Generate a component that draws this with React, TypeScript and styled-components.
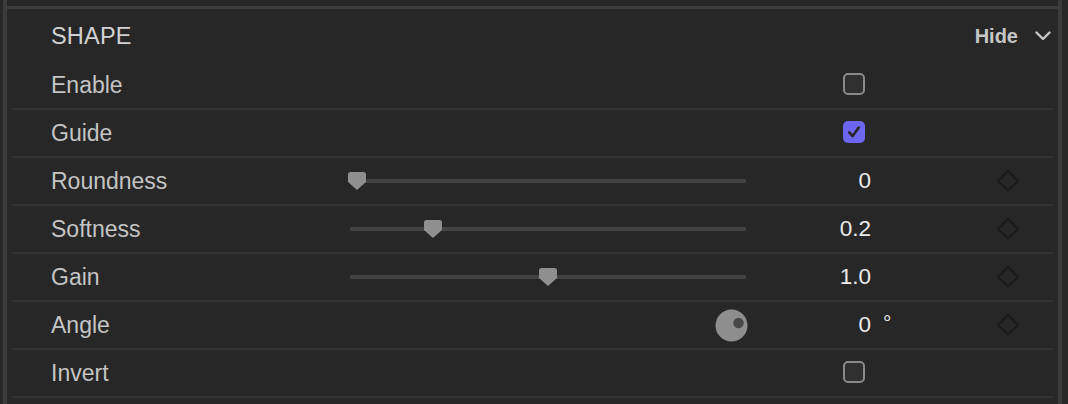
import React from 'react';
import styled, { createGlobalStyle } from 'styled-components';

type Control =
  | { kind: 'check'; checked: boolean }
  | { kind: 'slider'; value: number; min: number; max: number; text: string }
  | { kind: 'dial'; text: string; unit: string };

interface Param {
  label: string;
  control: Control;
}

const params: Param[] = [
  { label: 'Enable', control: { kind: 'check', checked: false } },
  { label: 'Guide', control: { kind: 'check', checked: true } },
  { label: 'Roundness', control: { kind: 'slider', value: 0, min: 0, max: 1, text: '0' } },
  { label: 'Softness', control: { kind: 'slider', value: 0.2, min: 0, max: 1, text: '0.2' } },
  { label: 'Gain', control: { kind: 'slider', value: 1, min: 0, max: 2, text: '1.0' } },
  { label: 'Angle', control: { kind: 'dial', text: '0', unit: '°' } },
  { label: 'Invert', control: { kind: 'check', checked: false } },
];

const GlobalStyle = createGlobalStyle`
  html, body {
    margin: 0;
    padding: 0;
    background: #272727;
    overflow: hidden;
  }
  body {
    font-family: "Liberation Sans", Arial, sans-serif;
  }
`;

const Frame = styled.div`
  margin-left: 3px;
  width: 1051px;
  height: 404px;
  padding-top: 6px;
  border-left: 4px solid #3b3b3b;
  border-right: 4px solid #3b3b3b;
  background: #272727;
`;

const TopRule = styled.div`
  height: 3px;
  background: #3b3b3b;
`;

const Rows = styled.div`
  margin: 0 5px;
`;

const Header = styled.div`
  height: 53px;
  display: flex;
  align-items: center;
  justify-content: space-between;
  padding-left: 39px;
  padding-right: 2px;
  padding-top: 2px;
  box-sizing: border-box;
`;

const Title = styled.div`
  font-size: 23.5px;
  letter-spacing: 0.2px;
  color: #d2d2d2;
`;

const HideButton = styled.div`
  display: flex;
  align-items: center;
  gap: 17px;
  font-size: 20px;
  font-weight: bold;
  color: #c6c6c6;
  padding-bottom: 1px;
`;

const Row = styled.div`
  height: 46px;
  display: grid;
  grid-template-columns: 338px 396px 125px 1fr 22px 34px;
  align-items: center;
  border-bottom: 2px solid #323232;
`;

const Label = styled.div`
  padding-left: 39px;
  font-size: 23px;
  color: #c4c4c4;
`;

const ControlCell = styled.div`
  display: flex;
  align-items: center;
  justify-content: flex-end;
  height: 100%;
`;

const ValueCell = styled.div<{ $inset?: number }>`
  display: flex;
  justify-content: flex-end;
  align-items: center;
  padding-right: ${p => p.$inset ?? 0}px;
  font-size: 22.5px;
  color: #ebebeb;
`;

const Unit = styled.div`
  padding-left: 12px;
  font-size: 21px;
  color: #e4e4e4;
  align-self: start;
  padding-top: 9px;
`;

const SliderWrap = styled.div`
  position: relative;
  width: 396px;
  height: 24px;
  display: flex;
  align-items: center;
`;

const Track = styled.div`
  width: 100%;
  height: 4px;
  border-radius: 2px;
  background: #444444;
`;

const Thumb = styled.svg`
  position: absolute;
  top: 3px;
  width: 18px;
  height: 18px;
  transform: translateX(-9px);
`;

const Box = styled.div<{ $checked: boolean }>`
  width: 22px;
  height: 22px;
  margin-bottom: 3px;
  box-sizing: border-box;
  border-radius: 5px;
  border: ${p => (p.$checked ? 'none' : '2px solid #8a8a8a')};
  background: ${p => (p.$checked ? '#6c66f0' : '#303030')};
  display: flex;
  align-items: center;
  justify-content: center;
`;

const Keyframe = styled.svg`
  width: 22px;
  height: 22px;
  display: block;
`;

const Slider: React.FC<{ value: number; min: number; max: number }> = ({ value, min, max }) => {
  const frac = (value - min) / (max - min);
  return (
    <SliderWrap>
      <Track />
      <Thumb viewBox="0 0 18 18" style={{ left: `${7 + frac * 382}px` }}>
        <path d="M2.5 0 H15.5 Q18 0 18 2.5 V10 L9 18 L0 10 V2.5 Q0 0 2.5 0 Z" fill="#8f8f8f" />
      </Thumb>
    </SliderWrap>
  );
};

const Dial: React.FC = () => (
  <svg width="33" height="33" viewBox="0 0 33 33" style={{ marginRight: -2, marginTop: 1 }}>
    <circle cx="16.5" cy="16.5" r="16" fill="#8e8e8e" />
    <circle cx="23.5" cy="14" r="5.2" fill="#494949" />
  </svg>
);

const Diamond: React.FC = () => (
  <Keyframe viewBox="0 0 22 22">
    <polygon points="11,1.2 20.8,11 11,20.8 1.2,11" fill="none" stroke="#1b1b1b" strokeWidth="2" />
  </Keyframe>
);

const CheckBox: React.FC<{ checked: boolean }> = ({ checked }) => (
  <Box $checked={checked}>
    {checked && (
      <svg width="14" height="14" viewBox="0 0 14 14">
        <path d="M2.2 7.4 L5.6 11 L11.8 2.6" fill="none" stroke="#262626" strokeWidth="2.6" strokeLinecap="round" strokeLinejoin="round" />
      </svg>
    )}
  </Box>
);

const ParamRow: React.FC<{ param: Param }> = ({ param }) => {
  const c = param.control;
  return (
    <Row>
      <Label>{param.label}</Label>
      <ControlCell>
        {c.kind === 'slider' && <Slider value={c.value} min={c.min} max={c.max} />}
        {c.kind === 'dial' && <Dial />}
      </ControlCell>
      {c.kind === 'check' ? (
        <ValueCell $inset={6}>
          <CheckBox checked={c.checked} />
        </ValueCell>
      ) : (
        <ValueCell>{c.text}</ValueCell>
      )}
      {c.kind === 'dial' ? <Unit>{c.unit}</Unit> : <div />}
      {c.kind === 'check' ? <div /> : <Diamond />}
      <div />
    </Row>
  );
};

export default function App() {
  return (
    <>
      <GlobalStyle />
      <Frame>
        <TopRule />
        <Rows>
          <Header>
            <Title>SHAPE</Title>
            <HideButton>
              Hide
              <svg width="16" height="10" viewBox="0 0 16 10">
                <path d="M1.5 1.5 L8 8 L14.5 1.5" fill="none" stroke="#c6c6c6" strokeWidth="2.4" strokeLinecap="round" strokeLinejoin="round" />
              </svg>
            </HideButton>
          </Header>
          {params.map(p => (
            <ParamRow key={p.label} param={p} />
          ))}
        </Rows>
      </Frame>
    </>
  );
}
